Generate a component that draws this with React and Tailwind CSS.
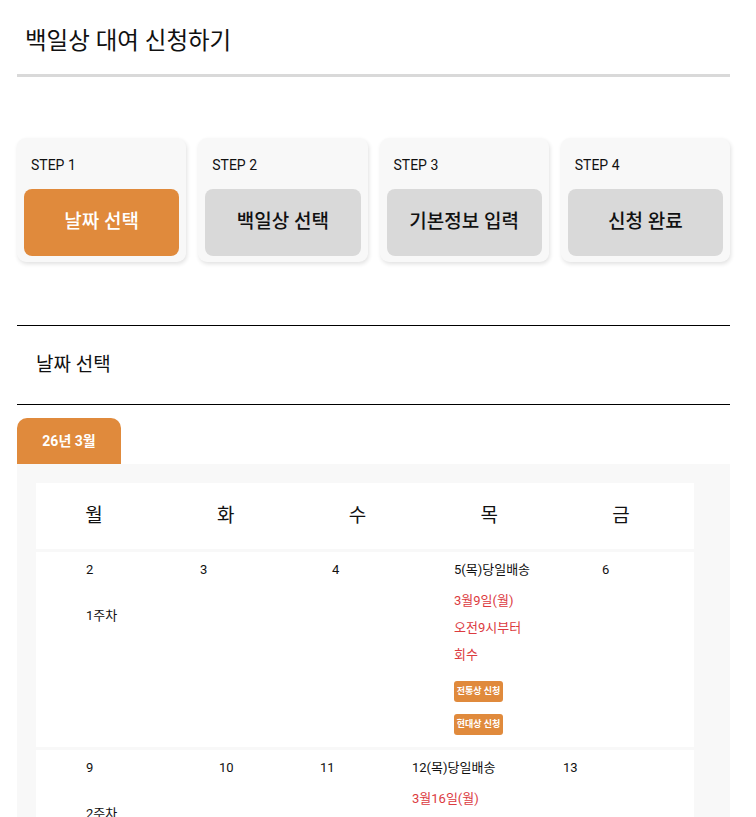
import React from "react";

const F = { fontFamily: 'Roboto, "Noto Sans CJK KR", sans-serif' };

function StepCard({ step, label, active }) {
  return (
    <div className="h-[124px] rounded-[9px] bg-[#f8f8f8] shadow-[1px_2px_4px_rgba(0,0,0,0.12)] px-[7px] pt-[17px] pb-[6px] flex flex-col">
      <div className="pl-[7px] text-[14px] leading-[20px] text-[#111]">{step}</div>
      <div
        className={
          "mt-[14px] h-[67px] rounded-[8px] flex items-center justify-center text-[19px] font-medium " +
          (active ? "bg-[#e08a3c] text-white" : "bg-[#d9d9d9] text-[#111]")
        }
      >
        {label}
      </div>
    </div>
  );
}

function Badge({ children }) {
  return (
    <div className="w-[49px] h-[21px] rounded-[3px] bg-[#e08a3c] text-white text-[9px] font-bold flex items-center justify-center">
      {children}
    </div>
  );
}

function Day({ children }) {
  return <div className="text-[13px] leading-[20px] text-[#111]">{children}</div>;
}

function Red({ children, className = "" }) {
  return <div className={"text-[13px] leading-[20px] text-[#dc3b3f] " + className}>{children}</div>;
}

export default function App() {
  return (
    <div style={F} className="bg-white min-h-[817px] w-[756px] overflow-hidden">
      <div className="pl-[17px] w-[730px]">
        <div className="pt-[26px] pl-[8px] h-[74px] text-[23.5px] leading-[30px] text-[#111]">백일상 대여 신청하기</div>
        <div className="h-[3px] bg-[#d9d9d9]" />

        <div className="mt-[61px] grid grid-cols-4 gap-[12px]">
          <StepCard step="STEP 1" label="날짜 선택" active />
          <StepCard step="STEP 2" label="백일상 선택" />
          <StepCard step="STEP 3" label="기본정보 입력" />
          <StepCard step="STEP 4" label="신청 완료" />
        </div>

        <div className="mt-[63px] h-px bg-black" />
        <div className="h-[78px] pl-[19px] flex items-center text-[19px] text-[#111]">날짜 선택</div>
        <div className="h-px bg-black" />

        <div className="mt-[13px] w-[104px] h-[46px] rounded-t-[10px] bg-[#e08a3c] text-white text-[14px] font-bold flex items-center justify-center">
          26년 3월
        </div>

        <div className="bg-[#f8f8f8] pt-[19px] pl-[19px] pr-[36px] pb-[40px]">
          <div className="bg-white h-[66px] flex items-center">
            <div className="ml-[-8px] w-[659px] grid grid-cols-5 text-center text-[19px] text-[#111]">
              <div>월</div>
              <div>화</div>
              <div>수</div>
              <div>목</div>
              <div>금</div>
            </div>
          </div>

          <div className="mt-[3px] bg-white flex pt-[8px] pb-[12px]">
            <div className="w-[164px] pl-[50px] shrink-0">
              <Day>2</Day>
              <div className="mt-[26px] text-[13px] leading-[20px] text-[#111]">1주차</div>
            </div>
            <div className="w-[132px] shrink-0"><Day>3</Day></div>
            <div className="w-[122px] shrink-0"><Day>4</Day></div>
            <div className="w-[148px] shrink-0">
              <Day>5(목)당일배송</Day>
              <Red className="mt-[11px]">3월9일(월)</Red>
              <Red className="mt-[7px]">오전9시부터</Red>
              <Red className="mt-[7px]">회수</Red>
              <div className="mt-[16px]"><Badge>전통상 신청</Badge></div>
              <div className="mt-[12px]"><Badge>현대상 신청</Badge></div>
            </div>
            <div className="flex-1"><Day>6</Day></div>
          </div>

          <div className="mt-[3px] bg-white flex pt-[8px] pb-[12px]">
            <div className="w-[183px] pl-[50px] shrink-0">
              <Day>9</Day>
              <div className="mt-[26px] text-[13px] leading-[20px] text-[#111]">2주차</div>
            </div>
            <div className="w-[101px] shrink-0"><Day>10</Day></div>
            <div className="w-[92px] shrink-0"><Day>11</Day></div>
            <div className="w-[151px] shrink-0">
              <Day>12(목)당일배송</Day>
              <Red className="mt-[11px]">3월16일(월)</Red>
              <Red className="mt-[7px]">오전9시부터</Red>
              <Red className="mt-[7px]">회수</Red>
            </div>
            <div className="flex-1"><Day>13</Day></div>
          </div>
        </div>
      </div>
    </div>
  );
}
